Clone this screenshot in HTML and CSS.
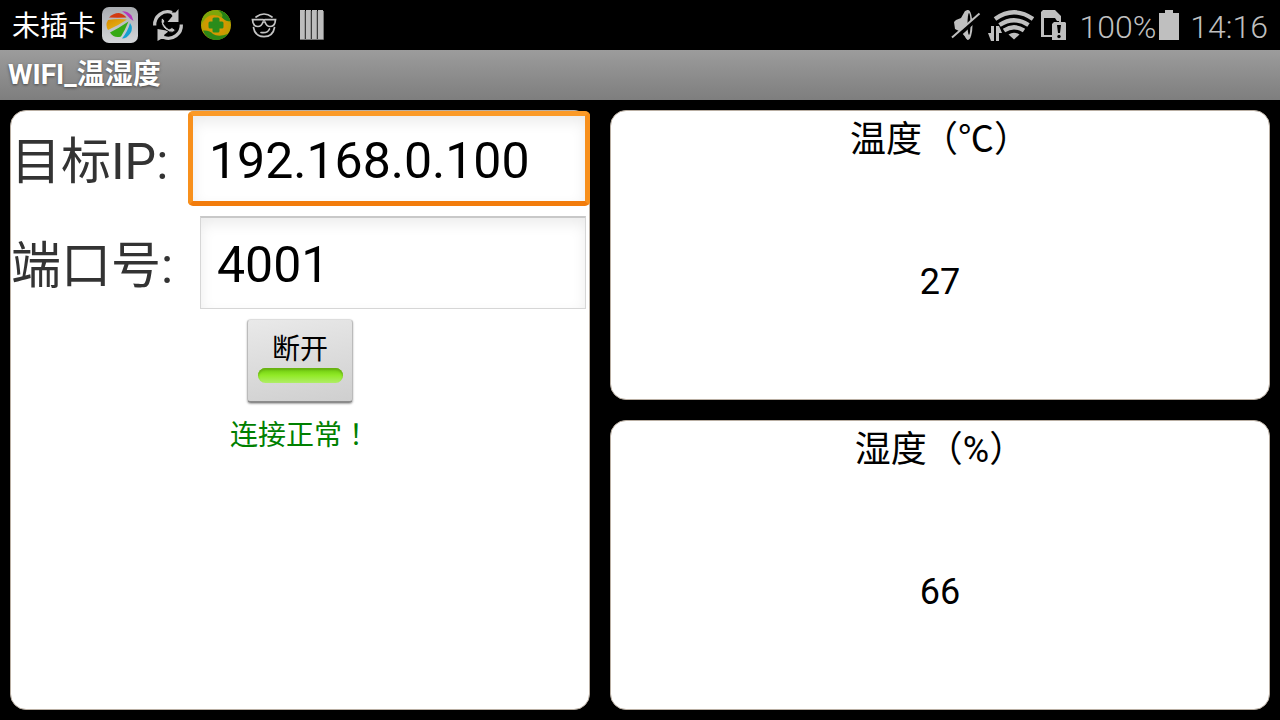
FILE: index.html
```html
<!DOCTYPE html>
<html lang="zh-CN">
<head>
<meta charset="utf-8">
<meta name="viewport" content="width=device-width, initial-scale=1">
<title>WIFI_温湿度</title>
<link rel="stylesheet" href="styles.css">
</head>
<body>
<header class="status-bar">
  <div class="status-left">
    <span class="carrier">未插卡</span>
    <div class="notifications">
      <svg viewBox="0 0 36 36" width="36" height="36" aria-hidden="true">
        <defs>
          <linearGradient id="tile" x1="0" y1="0" x2="0" y2="1"><stop offset="0" stop-color="#a9acb1"/><stop offset="1" stop-color="#d3d5d8"/></linearGradient>
          <linearGradient id="sun" x1="0" y1="0" x2="1" y2="1"><stop offset="0" stop-color="#d98a00"/><stop offset="1" stop-color="#e8c21c"/></linearGradient>
        </defs>
        <rect width="36" height="36" rx="7" fill="url(#tile)"/>
        <path d="M7 10.500Q11 6 17 6Q22 7 24.500 10.500Q15 10.800 7 10.500Z" fill="#d23a10"/>
        <path d="M20 4.200Q26 4 29.500 8.500L31.500 14L28 11.500Q25 7 20 4.200Z" fill="#b637bd"/>
        <path d="M6 13Q16 11.500 25 12.500Q17 18 6 23Q3 18 6 13Z" fill="url(#sun)"/>
        <path d="M8 25.500Q17 21 26.500 14.500Q23 23 19 29.500Q12 31.500 8 25.500Z" fill="#35a914"/>
        <path d="M28 16Q31.500 21 28.500 26Q25 31.500 20 31.500Q26 24 28 16Z" fill="#159fd0"/>
      </svg>
      <svg viewBox="0 0 36 36" width="36" height="36" aria-hidden="true" fill="#c4c4c4">
        <path d="M4.700 18.500A13 13 0 0 1 22 5.500" fill="none" stroke="#c4c4c4" stroke-width="3.300"/>
        <path d="M31.300 17.500A13 13 0 0 1 14 30.500" fill="none" stroke="#c4c4c4" stroke-width="3.300"/>
        <path d="M28.500 2V15H17.500L22.500 9L20 5.500H25.500Z"/><path d="M7.500 34V22L19 24L14 28L16 32H11Z"/>
        <path d="M12.500 11L15 14L13.700 16.500Q15.500 20 19 22L22 20.500L25.500 23Q23.500 26.500 19.500 25Q12 21.500 11 15Q10.800 12 12.500 11Z" stroke="#000" stroke-width="1"/>
      </svg>
      <svg viewBox="0 0 36 36" width="36" height="36" aria-hidden="true">
        <defs>
          <radialGradient id="gold"><stop offset="0" stop-color="#d6a71c"/><stop offset=".6" stop-color="#d59700"/><stop offset="1" stop-color="#b8a200"/></radialGradient>
        </defs>
        <circle cx="18" cy="18" r="15" fill="url(#gold)"/>
        <path d="M18 3Q29 3.500 32.500 14Q28 15 24.500 11Q19 7 12 8.500Q6 11 3.300 18Q3 4 18 3Z" fill="#7ea60a"/>
        <path d="M20 3.200Q29 4 32.500 14Q28 15 24 10.500Q26 7 20 3.200Z" fill="#258116"/>
        <path d="M5 23.500Q12 23 15 27Q20 30.500 30 27Q25 33.500 17 33Q8 32 5 23.500Z" fill="#2d8616"/>
        <path d="M16 12H20V16H24V20H20V24H16V20H12V16H16Z" fill="#2a8c1b" stroke="#2a8c1b" stroke-width="3" stroke-linejoin="round"/>
      </svg>
      <svg viewBox="0 0 36 36" width="36" height="36" aria-hidden="true" fill="none" stroke="#c4c4c4" stroke-width="1.700" stroke-linecap="round">
        <path d="M10 10Q18 4 26 10"/>
        <path d="M6.500 12.700H17L18 13.300L19 12.700H29.500L29 15.500Q28 19.500 24 19.500Q20.500 19.500 19 15H17Q15.500 19.500 12 19.500Q8 19.500 7 15.500Z"/>
        <path d="M7.500 20.500Q9 29.500 18 29.700Q27 29.500 28.500 20.500"/><path d="M15 25.500Q21.500 26.500 23.500 22"/>
      </svg>
      <svg viewBox="0 0 36 36" width="36" height="36" aria-hidden="true">
        <path d="M6 3H11V33H6ZM12 3H17V33H12ZM18 3H23V33H18ZM24 3H29V33H24Z" fill="#bdbdbd"/>
        <path d="M11 4V32L12 33M17 4V32L18 33M23 4V32L24 33M29.500 4V32.500H6" fill="none" stroke="#777"/>
      </svg>
    </div>
  </div>
  <div class="status-right">
    <svg viewBox="0 0 32 36" width="32" height="36" role="img" aria-label="静音" fill="#bfbfbf">
      <path d="M3 15L5 13L10 11L14 4L17 3V33L10 25L4 22Z"/>
      <ellipse cx="17" cy="18" rx="4.500" ry="15"/>
      <ellipse cx="18" cy="17" rx="1.500" ry="11" fill="#000"/>
      <path d="M2 33L30 8" stroke="#000" stroke-width="4"/>
      <path d="M1 30.500L28.500 6.500" stroke="#bfbfbf" stroke-width="2"/>
    </svg>
    <svg viewBox="0 0 48 36" width="48" height="36" role="img" aria-label="无线网络">
      <path d="M28 32.500L22.500 27.500Q28 24 33.500 27.500Z" fill="#bfbfbf"/>
      <path d="M18 23.500Q28 17 38 23.500M13.500 18Q28 8.500 42.500 18M9 12Q28-1.500 47 12" fill="none" stroke="#bfbfbf" stroke-width="4.300"/>
      <path d="M0 24L5 17H11L17 26V34H0Z" fill="#000"/>
      <path d="M5 19H8V34H5L2 26H5ZM10 19H13L16 26H13V34H10Z" fill="#bfbfbf"/>
    </svg>
    <svg viewBox="-3 0 31 36" width="31" height="36" role="img" aria-label="无 SIM 卡">
      <path d="M3 3H15L21 9V14H17L15 11H4V29H11V30H1V5Z" fill="#bfbfbf"/>
      <path d="M2 10V29H13M20 9V15" fill="none" stroke="#bfbfbf" stroke-width="2"/>
      <path d="M14 15H25L26 16V33H12V17Z" fill="#bfbfbf"/>
      <path d="M17 18H21L20 26H18Z" fill="#000"/><circle cx="19" cy="29.500" r="1.700" fill="#000"/>
    </svg>
    <span class="level">100%</span>
    <svg class="battery" viewBox="0 0 20 36" width="20" height="36" role="img" aria-label="电池"><path d="M6 3H14V6H20V33H0V6H6Z" fill="#bfbfbf"/></svg>
    <time class="clock">14:16</time>
  </div>
</header>
<h1 class="title-bar">WIFI_温湿度</h1>
<main class="content">
  <form class="panel connection">
    <div class="field field-ip">
      <label for="ip">目标IP:</label>
      <input class="input-focused" id="ip" type="text" value="192.168.0.100">
    </div>
    <div class="field field-port">
      <label for="port">端口号:</label>
      <input id="port" type="text" value="4001">
    </div>
    <button class="toggle" type="button" aria-pressed="true">断开<span class="toggle-light"></span></button>
    <p class="message">连接正常<span class="mark" lang="zh-TW">！</span></p>
  </form>
  <section class="panel reading">
    <h2>温度<span class="mark" lang="zh-TW">（</span>℃<span class="mark" lang="zh-TW">）</span></h2>
    <p class="value">27</p>
  </section>
  <section class="panel reading">
    <h2>湿度<span class="mark" lang="zh-TW">（</span>%<span class="mark" lang="zh-TW">）</span></h2>
    <p class="value">66</p>
  </section>
</main>
</body>
</html>
```

FILE: styles.css
```css
* { box-sizing: border-box; }

body {
  display: flex;
  flex-direction: column;
  min-height: 100vh;
  margin: 0;
  background: #000;
  color: #000;
  font-family: Roboto, "Noto Sans CJK SC", sans-serif;
}

svg { display: block; flex: none; }

.status-bar,
.status-left,
.status-right,
.notifications {
  display: flex;
  align-items: center;
}

.status-bar {
  justify-content: space-between;
  height: 50px;
  padding: 0 12px;
}

.status-left { gap: 6px; }
.notifications { gap: 12px; }
.status-right { gap: 3px; }

.carrier {
  padding-top: 4px;
  color: #fff;
  font-size: 28px;
  line-height: 36px;
}

.level,
.clock {
  padding-top: 4px;
  color: #bfbfbf;
  font-size: 32px;
  font-weight: 300;
  line-height: 36px;
}

.level { padding-left: 8px; }
.clock { padding-left: 8px; }

.title-bar {
  margin: 0;
  padding: 0 8px;
  background: linear-gradient(#9c9c9c, #7e7e7e);
  color: #fff;
  font-size: 28px;
  line-height: 50px;
  text-shadow: 0 1px 3px #444;
}

.content {
  flex: 1;
  display: grid;
  grid-template-columns: minmax(0, 29fr) minmax(0, 33fr);
  grid-template-rows: 1fr 1fr;
  gap: 20px;
  padding: 10px;
}

.panel {
  border: 1px solid #b9aea2;
  border-radius: 16px;
  background: #fff;
}

.connection {
  grid-row: span 2;
  display: flex;
  flex-direction: column;
  align-items: center;
}

.field {
  display: flex;
  align-items: center;
  align-self: stretch;
  margin-bottom: 10px;
}

.field label {
  flex: none;
  padding-top: 6px;
  color: #333;
  font-size: 50px;
  line-height: 60px;
}

.field-ip { margin-right: -1px; }
.field-port { padding-right: 3px; }
.field-ip label { width: 177px; }
.field-port label { width: 189px; }

.field input {
  flex: 1;
  min-width: 0;
  height: 93px;
  padding: 4px 16px 0;
  border: 1px solid #d6d6d6;
  border-top: 2px solid #c8c8c8;
  background: #fff;
  box-shadow: inset 0 6px 14px #ececec;
  color: #000;
  font: inherit;
  font-size: 50px;
  outline: none;
}

.field .input-focused {
  height: 95px;
  border: 5px solid #f8901c;
  border-top-color: #fb9a28;
  border-bottom-color: #f27c0c;
  border-radius: 5px;
}

.toggle {
  display: flex;
  flex-direction: column;
  align-items: center;
  width: 106px;
  height: 84px;
  padding: 12px 10px 8px;
  border: 1px solid #bbb;
  border-top-color: #ddd;
  border-bottom: 2px solid #8c8c8c;
  border-radius: 4px;
  background: linear-gradient(170deg, #e9e9e9, #cfcfcf);
  box-shadow: 0 1px 2px #aaa;
  color: #000;
  font: inherit;
  font-size: 28px;
  line-height: 36px;
}

.toggle-light {
  flex: none;
  width: 85px;
  height: 15px;
  border-radius: 8px;
  background: linear-gradient(#6cc80c, #92ea28 50%, #b0ee68);
  box-shadow: inset 0 2px 2px #68b014;
}

.message {
  margin: 10px 0 0;
  color: #008000;
  font-size: 28px;
  line-height: 40px;
}

.mark { font-family: "Noto Sans CJK TC", sans-serif; }

.reading {
  display: flex;
  flex-direction: column;
  text-align: center;
}

.reading h2 {
  margin: 0;
  font-size: 36px;
  font-weight: 400;
  line-height: 50px;
}

.value {
  flex: 1;
  display: flex;
  align-items: center;
  justify-content: center;
  margin: 0;
  font-size: 36px;
  line-height: 40px;
}
```
